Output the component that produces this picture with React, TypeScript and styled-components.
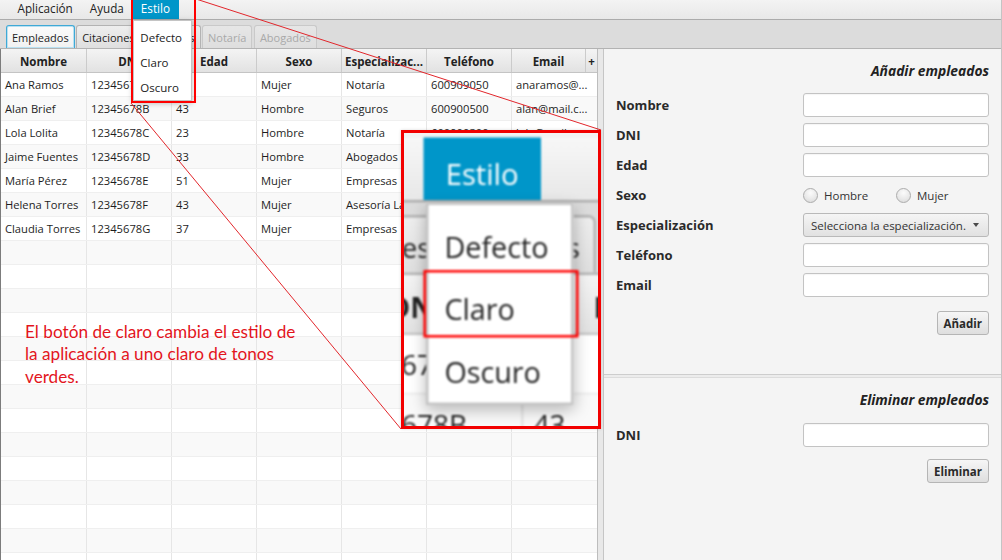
import React from "react";
import styled, { createGlobalStyle, css } from "styled-components";

const UI_FONT = `"Open Sans", "Noto Sans", sans-serif`;
const NOTE_RED = "#e3151d";

const GlobalStyle = createGlobalStyle`
  html, body { margin: 0; padding: 0; }
  body { background: #f4f4f4; font-family: ${UI_FONT}; color: #222; }
  *, *::before, *::after { box-sizing: border-box; }
`;

/* ---------- page frame ---------- */
const Page = styled.div`
  position: relative;
  width: 1002px;
  height: 560px;
  overflow: hidden;
  display: flex;
  flex-direction: column;
  background: #f4f4f4;
  border-right: 1px solid #c4c4c4;
`;

/* ---------- menu bar ---------- */
const MenuBarRow = styled.div`
  position: relative;
  z-index: 3;
  flex: none;
  display: flex;
  height: 26px;
  margin-top: -6px;
  padding-left: 9px;
  background: linear-gradient(#f7f7f7, #e8e8e8);
  border-bottom: 1px solid #ababab;
`;

const MenuItem = styled.div<{ $active?: boolean }>`
  position: relative;
  display: flex;
  align-items: center;
  padding: 2px 8.5px 0;
  font-size: 11.7px;
  color: ${(p) => (p.$active ? "#fff" : "#222")};
  background: ${(p) => (p.$active ? "#0096c9" : "transparent")};
`;

const Dropdown = styled.div`
  position: absolute;
  top: calc(100% + 1px);
  left: 1px;
  width: 59px;
  padding: 4px 0 0;
  background: #fff;
  border: 1px solid #c4c4c4;
  box-shadow: 0 2px 6px rgba(0, 0, 0, 0.28);
`;

const DropItem = styled.div<{ $marked?: boolean }>`
  position: relative;
  height: 25px;
  display: flex;
  align-items: center;
  padding-left: 6px;
  font-size: 11.5px;
  color: #222;
  ${(p) =>
    p.$marked &&
    css`
      &::after {
        content: "";
        position: absolute;
        left: -2.4px;
        right: -2.4px;
        top: -3px;
        bottom: 1px;
        border: 1.6px solid #ff0000;
      }
    `}
`;

function MenuBar({ inLens }: { inLens?: boolean }) {
  return (
    <MenuBarRow>
      <MenuItem>Aplicación</MenuItem>
      <MenuItem>Ayuda</MenuItem>
      <MenuItem $active>
        Estilo
        <Dropdown>
          <DropItem>Defecto</DropItem>
          <DropItem $marked={inLens}>Claro</DropItem>
          <DropItem>Oscuro</DropItem>
        </Dropdown>
      </MenuItem>
    </MenuBarRow>
  );
}

/* ---------- tabs ---------- */
const TabStrip = styled.div`
  flex: none;
  display: flex;
  align-items: flex-end;
  gap: 1.5px;
  height: 29px;
  padding-left: 6px;
  background: #dcdcdc;
  border-bottom: 1px solid #b3b3b3;
`;

const Tab = styled.div<{ $selected?: boolean; $disabled?: boolean }>`
  height: 23px;
  display: flex;
  align-items: center;
  padding: 0 5px;
  font-size: 11px;
  border: 1px solid #b3b3b3;
  border-bottom: none;
  border-radius: 3px 3px 0 0;
  background: linear-gradient(#eeeeee, #dfdfdf);
  color: #222;
  ${(p) =>
    p.$selected &&
    css`
      background: linear-gradient(#fbfbfb, #f1f1f1);
      border-color: #3fa9d6;
      box-shadow: inset 0 0 0 1px #b9e0f1;
    `}
  ${(p) =>
    p.$disabled &&
    css`
      color: #a9a9a9;
      border-color: #c9c9c9;
      background: linear-gradient(#e6e6e6, #dedede);
    `}
`;

const TABS: { label: string; selected?: boolean; disabled?: boolean }[] = [
  { label: "Empleados", selected: true },
  { label: "Citaciones" },
  { label: "Procesos" },
  { label: "Notaría", disabled: true },
  { label: "Abogados", disabled: true },
];

function Tabs() {
  return (
    <TabStrip>
      {TABS.map((t) => (
        <Tab key={t.label} $selected={t.selected} $disabled={t.disabled}>
          {t.label}
        </Tab>
      ))}
    </TabStrip>
  );
}

/* ---------- table ---------- */
const TablePane = styled.div`
  flex: none;
  width: 598px;
  display: flex;
  flex-direction: column;
  background: #fff;
  border-left: 1px solid #7c7c7c;
  border-right: 1px solid #bdbdbd;
  overflow: hidden;
`;

const HeaderRow = styled.div`
  flex: none;
  display: flex;
  height: 24px;
  background: linear-gradient(#f4f4f4, #e2e2e2);
  border-bottom: 1px solid #c4c4c4;
`;

const HeaderCell = styled.div<{ $w: number }>`
  flex: none;
  width: ${(p) => p.$w}px;
  display: flex;
  align-items: center;
  justify-content: center;
  padding-top: 1px;
  font-size: 11.5px;
  font-weight: 700;
  color: #222;
  white-space: nowrap;
  overflow: hidden;
  border-right: 1px solid #cbcbcb;
  &:last-child {
    border-right: none;
  }
`;

const BodyRow = styled.div<{ $odd: boolean }>`
  flex: none;
  display: flex;
  height: 24px;
  background: ${(p) => (p.$odd ? "#f9f9f9" : "#ffffff")};
  border-bottom: 1px solid #efefef;
`;

const BodyCell = styled.div<{ $w: number }>`
  flex: none;
  width: ${(p) => p.$w}px;
  display: flex;
  align-items: center;
  padding-left: 4px;
  font-size: 11.2px;
  color: #1e1e1e;
  white-space: nowrap;
  overflow: hidden;
  border-right: 1px solid #e6e6e6;
  &:last-child {
    border-right: none;
  }
`;

type Emp = {
  nombre: string;
  dni: string;
  edad: string;
  sexo: string;
  esp: string;
  tel: string;
  email: string;
};

const EMPLOYEES: Emp[] = [
  { nombre: "Ana Ramos", dni: "12345678A", edad: "28", sexo: "Mujer", esp: "Notaría", tel: "600909050", email: "anaramos@..." },
  { nombre: "Alan Brief", dni: "12345678B", edad: "43", sexo: "Hombre", esp: "Seguros", tel: "600900500", email: "alan@mail.c..." },
  { nombre: "Lola Lolita", dni: "12345678C", edad: "23", sexo: "Hombre", esp: "Notaría", tel: "600900300", email: "lola@mail.c..." },
  { nombre: "Jaime Fuentes", dni: "12345678D", edad: "33", sexo: "Hombre", esp: "Abogados", tel: "", email: "" },
  { nombre: "María Pérez", dni: "12345678E", edad: "51", sexo: "Mujer", esp: "Empresas", tel: "", email: "" },
  { nombre: "Helena Torres", dni: "12345678F", edad: "43", sexo: "Mujer", esp: "Asesoría Lab...", tel: "", email: "" },
  { nombre: "Claudia Torres", dni: "12345678G", edad: "37", sexo: "Mujer", esp: "Empresas", tel: "", email: "" },
];

const HEADERS: [string, number][] = [
  ["Nombre", 86],
  ["DNI", 85],
  ["Edad", 85],
  ["Sexo", 85],
  ["Especializac...", 85],
  ["Teléfono", 85],
  ["Email", 74],
  ["+", 11],
];
const BODY_W = [86, 85, 85, 85, 85, 85, 85];

function EmployeeTable({ rowCount }: { rowCount: number }) {
  const rows = Array.from({ length: rowCount }, (_, i) => EMPLOYEES[i]);
  return (
    <TablePane>
      <HeaderRow>
        {HEADERS.map(([h, w]) => (
          <HeaderCell key={h} $w={w}>
            {h}
          </HeaderCell>
        ))}
      </HeaderRow>
      {rows.map((e, i) => {
        const vals = e ? [e.nombre, e.dni, e.edad, e.sexo, e.esp, e.tel, e.email] : ["", "", "", "", "", "", ""];
        return (
          <BodyRow key={i} $odd={i % 2 === 1}>
            {vals.map((v, c) => (
              <BodyCell key={c} $w={BODY_W[c]}>
                {v}
              </BodyCell>
            ))}
          </BodyRow>
        );
      })}
    </TablePane>
  );
}

/* ---------- side panel ---------- */
const Workspace = styled.div`
  flex: 1;
  min-height: 0;
  display: flex;
`;

const Splitter = styled.div`
  flex: none;
  width: 5px;
  background: #e8e8e8;
`;

const SidePanel = styled.div`
  flex: 1;
  display: flex;
  flex-direction: column;
  background: #f4f4f4;
  border-left: 1px solid #c5c5c5;
`;

const Section = styled.section<{ $h?: number; $top: number }>`
  flex: ${(p) => (p.$h ? "none" : "1")};
  height: ${(p) => (p.$h ? `${p.$h}px` : "auto")};
  padding: ${(p) => p.$top}px 12px 0 12px;
  display: flex;
  flex-direction: column;
`;

const SectionTitle = styled.div`
  text-align: right;
  font-size: 13.8px;
  line-height: 18px;
  font-weight: 700;
  font-style: italic;
  color: #222;
`;

const FormGrid = styled.div<{ $mt: number }>`
  margin-top: ${(p) => p.$mt}px;
  display: grid;
  grid-template-columns: 1fr 186px;
  grid-auto-rows: 24px;
  row-gap: 6px;
`;

const Label = styled.div`
  align-self: center;
  font-size: 13px;
  font-weight: 700;
  color: #2a2a2a;
`;

const TextInput = styled.div`
  background: #fff;
  border: 1px solid #c3c3c3;
  border-radius: 3px;
  box-shadow: inset 0 1px 1px rgba(0, 0, 0, 0.04);
`;

const RadioGroup = styled.div`
  display: flex;
  align-items: center;
`;

const RadioOption = styled.div`
  width: 115px;
  display: flex;
  align-items: center;
  gap: 6px;
  font-size: 11.5px;
  color: #333;
`;

const RadioDot = styled.span`
  width: 15px;
  height: 15px;
  border-radius: 50%;
  border: 1px solid #acacac;
  background: radial-gradient(circle at 50% 30%, #fbfbfb 0%, #e9e9e9 55%, #d6d6d6 100%);
`;

const Combo = styled.div`
  display: flex;
  align-items: center;
  justify-content: space-between;
  padding: 0 9px 0 7px;
  border: 1px solid #b9b9b9;
  border-radius: 3px;
  background: linear-gradient(#f5f5f5, #e1e1e1);
  font-size: 11.5px;
  color: #333;
`;

const ComboArrow = styled.span`
  width: 0;
  height: 0;
  border-left: 3.5px solid transparent;
  border-right: 3.5px solid transparent;
  border-top: 4px solid #4a4a4a;
`;

const ButtonRow = styled.div<{ $mt: number }>`
  margin-top: ${(p) => p.$mt}px;
  display: flex;
  justify-content: flex-end;
`;

const PushButton = styled.div`
  height: 24px;
  padding: 0 6px;
  display: flex;
  align-items: center;
  border: 1px solid #b5b5b5;
  border-radius: 3px;
  background: linear-gradient(#f6f6f6, #dedede);
  font-size: 11.5px;
  font-weight: 700;
  color: #2a2a2a;
`;

const SectionDivider = styled.div`
  flex: none;
  height: 4px;
  background: #ececec;
  border-top: 1px solid #cdcdcd;
  border-bottom: 1px solid #dcdcdc;
`;

/* ---------- annotations ---------- */
const StyleMark = styled.div`
  position: absolute;
  left: 131px;
  top: -3px;
  width: 65px;
  height: 106px;
  border: 2px solid #ff0000;
  z-index: 6;
  pointer-events: none;
`;

const Callouts = styled.svg`
  position: absolute;
  left: 0;
  top: 0;
  z-index: 6;
  pointer-events: none;
`;

const Note = styled.div`
  position: absolute;
  left: 25px;
  top: 321px;
  z-index: 6;
  font-family: Lato, "Open Sans", sans-serif;
  font-size: 17.2px;
  line-height: 22.3px;
  color: ${NOTE_RED};
`;

const Lens = styled.div`
  position: absolute;
  left: 401px;
  top: 130px;
  width: 200px;
  height: 299px;
  z-index: 7;
  border: 3px solid #f20000;
  background: #f3f3f3;
  overflow: hidden;
  box-shadow: 0 0 3px rgba(0, 0, 0, 0.15);
`;

const LensStage = styled.div`
  width: 598px;
  display: flex;
  flex-direction: column;
  transform: translate(-310.5px, 19.5px) scale(2.5);
  transform-origin: 0 0;
  filter: blur(0.35px);
`;

export default function App() {
  return (
    <>
      <GlobalStyle />
      <Page>
        <MenuBar />
        <Tabs />
        <Workspace>
          <EmployeeTable rowCount={21} />
          <Splitter />
          <SidePanel>
            <Section $h={325} $top={13}>
              <SectionTitle>Añadir empleados</SectionTitle>
              <FormGrid $mt={13}>
                <Label>Nombre</Label>
                <TextInput />
                <Label>DNI</Label>
                <TextInput />
                <Label>Edad</Label>
                <TextInput />
                <Label>Sexo</Label>
                <RadioGroup>
                  <RadioOption>
                    <RadioDot />
                    Hombre
                  </RadioOption>
                  <RadioOption>
                    <RadioDot />
                    Mujer
                  </RadioOption>
                </RadioGroup>
                <Label>Especialización</Label>
                <Combo>
                  Selecciona la especialización.
                  <ComboArrow />
                </Combo>
                <Label>Teléfono</Label>
                <TextInput />
                <Label>Email</Label>
                <TextInput />
              </FormGrid>
              <ButtonRow $mt={14}>
                <PushButton>Añadir</PushButton>
              </ButtonRow>
            </Section>
            <SectionDivider />
            <Section $top={13}>
              <SectionTitle>Eliminar empleados</SectionTitle>
              <FormGrid $mt={14}>
                <Label>DNI</Label>
                <TextInput />
              </FormGrid>
              <ButtonRow $mt={12}>
                <PushButton>Eliminar</PushButton>
              </ButtonRow>
            </Section>
          </SidePanel>
        </Workspace>

        <StyleMark />
        <Callouts width={1002} height={560} viewBox="0 0 1002 560">
          <line x1="196" y1="-1" x2="601" y2="130" stroke="#e2262b" strokeWidth="1" />
          <line x1="131" y1="103" x2="401" y2="429" stroke="#e2262b" strokeWidth="1" />
        </Callouts>
        <Note>
          El botón de claro cambia el estilo de
          <br />
          la aplicación a uno claro de tonos
          <br />
          verdes.
        </Note>
        <Lens>
          <LensStage>
            <MenuBar inLens />
            <Tabs />
            <EmployeeTable rowCount={3} />
          </LensStage>
        </Lens>
      </Page>
    </>
  );
}
